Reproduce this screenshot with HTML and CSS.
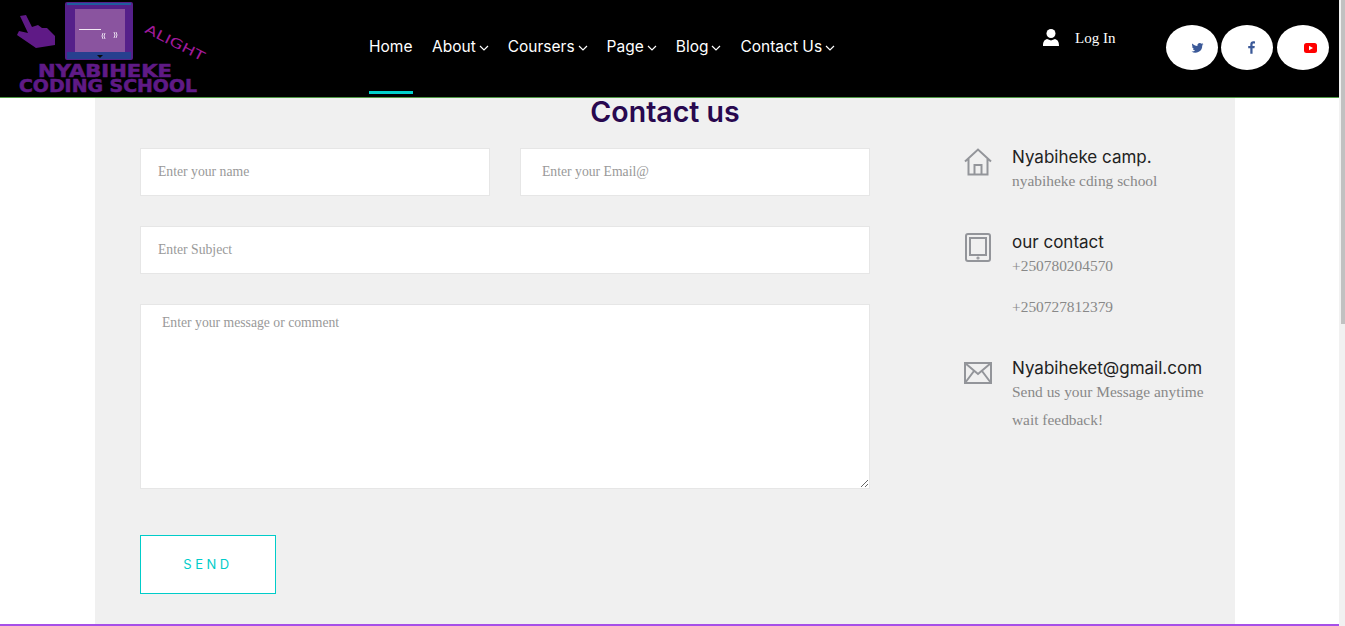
FILE: index.html
```html
<!DOCTYPE html>
<html lang="en">
<head>
    <meta charset="UTF-8">
    <meta name="viewport" content="width=device-width, initial-scale=1.0">
    <title>Contact us</title>
    <link rel="stylesheet" href="styles.css">
</head>
<body>
    <div class="page">
        <header class="topbar">
            <a href="#" class="logo">
                <svg width="220" height="97" viewBox="0 0 220 97">
                    <path d="M20 16l6-1 6 12 6-2 4 3h5l8 8v9l-19 3-19-13 2-4 9 2z" fill="#5f1a86"/>
                    <rect x="65" y="2" width="68" height="58" rx="2" fill="#55208a"/>
                    <rect x="67" y="3" width="64" height="2" fill="#1f5c9e"/>
                    <rect x="67" y="52" width="64" height="7" fill="#27408f"/>
                    <rect x="75" y="9" width="50" height="43" fill="#8a549f"/>
                    <path d="M97 55h6l-3 3z" fill="#0b0b0b"/>
                    <rect x="79" y="29" width="22" height="1" fill="#f2e8f4"/>
                    <path d="M103 33q-2 3 0 6M105 33q-2 3 0 6M114 32q2 3 0 6M116 32q2 3 0 6" stroke="#e8dcee" fill="none"/>
                    <text x="144" y="32" class="logo-tag" transform="rotate(27 144 32)" textLength="65" lengthAdjust="spacingAndGlyphs">ALIGHT</text>
                    <text x="38" y="77" class="logo-name" textLength="134" lengthAdjust="spacingAndGlyphs">NYABIHEKE</text>
                    <text x="19" y="92" class="logo-name" textLength="178" lengthAdjust="spacingAndGlyphs">CODING SCHOOL</text>
                </svg>
            </a>
            <nav class="main-nav">
                <a href="#" class="active">Home</a>
                <a href="#">About<svg class="chev" viewBox="0 0 10 6"><path d="M1 1l4 4 4-4"/></svg></a>
                <a href="#">Coursers<svg class="chev" viewBox="0 0 10 6"><path d="M1 1l4 4 4-4"/></svg></a>
                <a href="#">Page<svg class="chev" viewBox="0 0 10 6"><path d="M1 1l4 4 4-4"/></svg></a>
                <a href="#">Blog<svg class="chev" viewBox="0 0 10 6"><path d="M1 1l4 4 4-4"/></svg></a>
                <a href="#">Contact Us<svg class="chev" viewBox="0 0 10 6"><path d="M1 1l4 4 4-4"/></svg></a>
            </nav>
            <a href="#" class="login">
                <svg width="16" height="17" viewBox="0 0 16 17"><circle cx="8" cy="4.500" r="4.500" fill="#fff"/><path d="M0 17c0-4 1-6 4-7l4 1.500 4-1.500c3 1 4 3 4 7z" fill="#fff"/></svg>
                <span>Log In</span>
            </a>
            <div class="socials">
                <a href="#" class="social"><svg width="13" height="13" viewBox="0 0 24 24"><path fill="#3b5998" d="M23 5.900c-.8.4-1.700.6-2.600.7.900-.6 1.600-1.400 2-2.500-.9.5-1.800.9-2.900 1.100A4.500 4.500 0 0 0 11.800 9.300C8 9.100 4.700 7.300 2.500 4.500c-1.200 2-.6 4.600 1.400 6-.7 0-1.400-.2-2-.6 0 2.200 1.500 4 3.600 4.500-.7.2-1.400.2-2 .1.600 1.800 2.200 3.100 4.200 3.100A9 9 0 0 1 1 19.500 12.800 12.800 0 0 0 20.700 8.100c.9-.6 1.700-1.400 2.300-2.200z"/></svg></a>
                <a href="#" class="social social-fb"><svg width="7" height="13" viewBox="0 0 10 18"><path fill="#3b5998" d="M6.500 18V10h2.700l.5-3.200H6.500V4.800c0-.9.3-1.600 1.600-1.600H10V.3C9.600.2 8.600 0 7.500 0 5 0 3.300 1.500 3.300 4.300v2.500H.3V10h3v8z"/></svg></a>
                <a href="#" class="social social-yt"><svg width="13" height="10" viewBox="0 0 13 10"><rect width="13" height="10" rx="2.500" fill="#f00"/><path d="M5 2.800v4.400L9 5z" fill="#fff"/></svg></a>
            </div>
        </header>

        <main class="contact">
            <h2 class="contact-title">Contact us</h2>
            <div class="contact-body">
                <form class="contact-form">
                    <div class="form-row">
                        <input type="text" class="field" placeholder="Enter your name">
                        <input type="text" class="field field-email" placeholder="Enter your Email@">
                    </div>
                    <input type="text" class="field" placeholder="Enter Subject">
                    <textarea class="field field-message" placeholder="Enter your message or comment"></textarea>
                    <button type="button" class="send-btn">SEND</button>
                </form>
                <aside class="contact-info">
                    <div class="info-item info-camp">
                        <svg class="info-icon" width="28" height="28" viewBox="0 0 28 28"><path d="M1 13.500L14 1.500l13 12M4.500 11v15.500h19V11M10.500 26.500V17h7v9.500"/></svg>
                        <div>
                            <h4>Nyabiheke camp.</h4>
                            <p>nyabiheke cding school</p>
                        </div>
                    </div>
                    <div class="info-item info-phone">
                        <svg class="info-icon" width="28" height="30" viewBox="0 0 28 30"><rect x="2" y="1" width="24" height="27" rx="2"/><rect x="6" y="5" width="16" height="17"/><circle cx="14" cy="25" r=".6"/></svg>
                        <div>
                            <h4>our contact</h4>
                            <p>+250780204570</p>
                            <p class="second-phone">+250727812379</p>
                        </div>
                    </div>
                    <div class="info-item">
                        <svg class="info-icon icon-mail" width="28" height="22" viewBox="0 0 28 22"><rect x="1" y="1" width="26" height="20"/><path d="M1 1l13 11L27 1M1 21l9-12M27 21l-9-12"/></svg>
                        <div>
                            <h4>Nyabiheket@gmail.com</h4>
                            <p>Send us your Message anytime</p>
                            <p>wait feedback!</p>
                        </div>
                    </div>
                </aside>
            </div>
        </main>

        <footer class="page-footer"></footer>
    </div>
    <div class="scrollbar"><div class="scrollbar-thumb"></div></div>
</body>
</html>
```

FILE: styles.css
```css
* {
    margin: 0;
    padding: 0;
    box-sizing: border-box;
}
body {
    display: flex;
    height: 626px;
    overflow: hidden;
    background: white;
    font-family: "Liberation Serif", serif;
}
a {
    text-decoration: none;
}
.page {
    flex: 1;
    min-width: 0;
}
.scrollbar {
    width: 6px;
    background: #f1f1f1;
    padding-left: 2px;
}
.scrollbar-thumb {
    height: 324px;
    background: #c1c1c1;
}
.topbar {
    display: flex;
    height: 98px;
    background: black;
    border-bottom: 1px solid #4f9a45;
}
.logo {
    display: block;
    width: 220px;
    height: 97px;
    flex-shrink: 0;
}
.logo-name {
    font-family: "DejaVu Sans", sans-serif;
    font-weight: bold;
    font-size: 18px;
    fill: #5f1a86;
    stroke: #5f1a86;
    stroke-width: 0.6;
}
.logo-tag {
    font-family: "DejaVu Sans", sans-serif;
    font-size: 13px;
    fill: #a01a9c;
}
.main-nav {
    display: flex;
    gap: 19px;
    margin-left: 149px;
    height: 94px;
    font-family: Inter, sans-serif;
}
.main-nav a {
    display: flex;
    align-items: center;
    gap: 3px;
    height: 94px;
    padding-bottom: 1px;
    color: white;
    font-size: 15.500px;
}
.main-nav a.active {
    width: 44px;
    border-bottom: 3px solid #00d1cc;
    padding-bottom: 0;
    padding-top: 1px;
}
.chev {
    width: 10px;
    height: 6px;
    margin-top: 3px;
    fill: none;
    stroke: white;
    stroke-width: 1.200;
}
.login {
    display: flex;
    gap: 16px;
    margin-left: 208px;
    padding-top: 29px;
    color: white;
    font-size: 15px;
    line-height: 18px;
}
.socials {
    display: flex;
    gap: 3px;
    margin-left: 51px;
    padding-top: 25px;
}
.social {
    display: flex;
    align-items: center;
    justify-content: flex-end;
    width: 52px;
    height: 45px;
    padding-right: 14px;
    background: white;
    border-radius: 50%;
}
.social-fb {
    padding-right: 18px;
}
.social-yt {
    padding-right: 12px;
    margin-left: 1px;
}
.contact {
    width: 1140px;
    height: 526px;
    margin-left: 95px;
    padding-left: 45px;
    background: #f0f0f0;
}
.contact-title {
    height: 28px;
    margin-bottom: 22px;
    padding-right: 45px;
    text-align: center;
    font-family: Inter, sans-serif;
    font-size: 28.500px;
    font-weight: 600;
    line-height: 28px;
    color: #28084f;
}
.contact-body {
    display: flex;
    gap: 95px;
}
.contact-form {
    display: flex;
    flex-direction: column;
    align-items: flex-start;
    flex-shrink: 0;
    gap: 30px;
    width: 730px;
}
.form-row {
    display: grid;
    grid-template-columns: 1fr 1fr;
    gap: 30px;
    width: 100%;
}
.field {
    display: block;
    width: 100%;
    height: 48px;
    padding: 0 17px;
    background: white;
    border: 1px solid #e6e6e6;
    outline: none;
    font-family: "Liberation Serif", serif;
    font-size: 13.700px;
    color: #555;
}
.field::placeholder {
    color: #999;
    opacity: 1;
}
.field-email {
    padding-left: 21px;
}
.field-message {
    height: 185px;
    padding: 9px 21px;
    line-height: 17px;
}
.send-btn {
    width: 136px;
    height: 59px;
    margin-top: 16px;
    padding-bottom: 2px;
    background: white;
    border: 1px solid #00ccc9;
    font-family: Inter, sans-serif;
    font-size: 13px;
    letter-spacing: 3.500px;
    color: #00ccc9;
}
.contact-info {
    width: 270px;
}
.info-item {
    display: flex;
    gap: 19px;
}
.info-camp {
    height: 85px;
}
.info-phone {
    height: 126px;
}
.info-icon {
    flex-shrink: 0;
    margin-left: -1px;
    margin-right: 1px;
    fill: none;
    stroke: #93959a;
    stroke-width: 2;
}
.icon-mail {
    margin-top: 3px;
}
.info-item h4 {
    margin-bottom: 1px;
    font-family: Inter, sans-serif;
    font-size: 17px;
    font-weight: 400;
    line-height: 18px;
    color: #222;
}
.info-item p {
    font-size: 15.400px;
    line-height: 28px;
    color: #888;
}
.info-item .second-phone {
    margin-top: 13px;
}
.page-footer {
    border-top: 2px solid #a64fe8;
}
```
